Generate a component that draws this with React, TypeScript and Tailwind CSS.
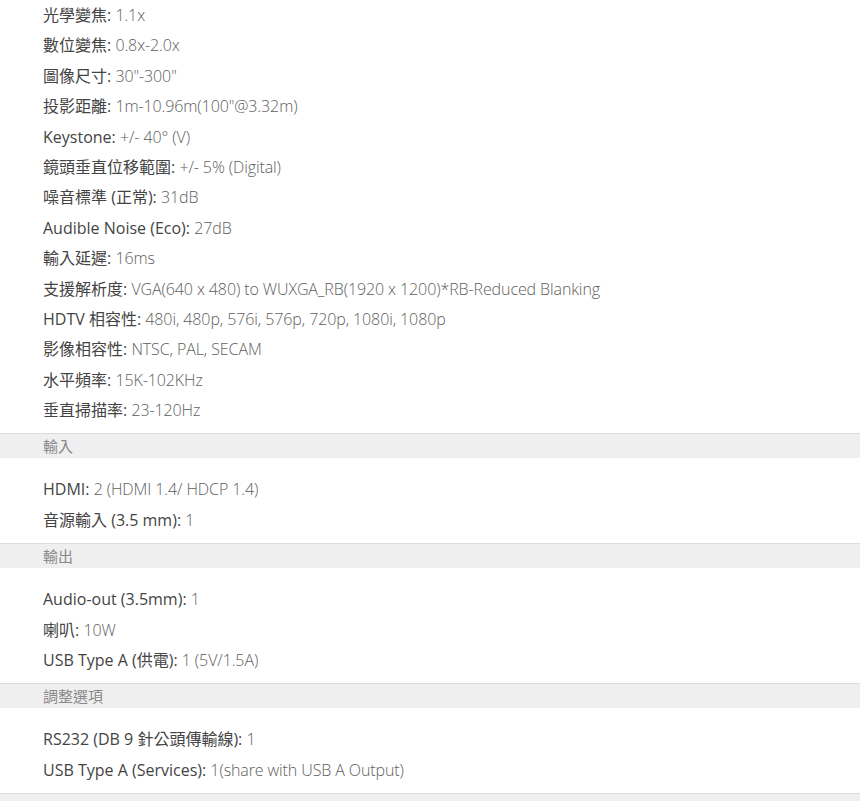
import React from "react";

type Spec = [string, string];

const groups: { title?: string; items: Spec[] }[] = [
  {
    items: [
      ["光學變焦", "1.1x"],
      ["數位變焦", "0.8x-2.0x"],
      ["圖像尺寸", "30\"-300\""],
      ["投影距離", "1m-10.96m(100\"@3.32m)"],
      ["Keystone", "+/- 40° (V)"],
      ["鏡頭垂直位移範圍", "+/- 5% (Digital)"],
      ["噪音標準 (正常)", "31dB"],
      ["Audible Noise (Eco)", "27dB"],
      ["輸入延遲", "16ms"],
      ["支援解析度", "VGA(640 x 480) to WUXGA_RB(1920 x 1200)*RB-Reduced Blanking"],
      ["HDTV 相容性", "480i, 480p, 576i, 576p, 720p, 1080i, 1080p"],
      ["影像相容性", "NTSC, PAL, SECAM"],
      ["水平頻率", "15K-102KHz"],
      ["垂直掃描率", "23-120Hz"],
    ],
  },
  {
    title: "輸入",
    items: [
      ["HDMI", "2 (HDMI 1.4/ HDCP 1.4)"],
      ["音源輸入 (3.5 mm)", "1"],
    ],
  },
  {
    title: "輸出",
    items: [
      ["Audio-out (3.5mm)", "1"],
      ["喇叭", "10W"],
      ["USB Type A (供電)", "1 (5V/1.5A)"],
    ],
  },
  {
    title: "調整選項",
    items: [
      ["RS232 (DB 9 針公頭傳輸線)", "1"],
      ["USB Type A (Services)", "1(share with USB A Output)"],
    ],
  },
  { title: " ", items: [] },
];

export default function App() {
  return (
    <div
      className="w-[860px] h-[801px] overflow-hidden bg-white text-[16px]"
      style={{ fontFamily: '"Open Sans", "Noto Sans CJK TC", sans-serif' }}
    >
      {groups.map((g, gi) => (
        <section key={gi}>
          {g.title !== undefined && (
            <div className="h-[25px] border-t border-[#dcdcdc] bg-[#efefef] pl-[43px] text-[15px] leading-[24px] text-[#888]">
              {g.title}
            </div>
          )}
          {g.items.length > 0 && (
            <ul className={gi === 0 ? "pb-[8px]" : "pt-[16px] pb-[8px]"}>
              {g.items.map(([k, v]) => (
                <li key={k} className="pl-[43px] h-[30.4px] leading-[30px] whitespace-nowrap">
                  <span className="text-[#444]">{k}: </span>
                  <span className="font-light tracking-[-0.1px] text-[#5e5e5e]">{v}</span>
                </li>
              ))}
            </ul>
          )}
        </section>
      ))}
    </div>
  );
}
